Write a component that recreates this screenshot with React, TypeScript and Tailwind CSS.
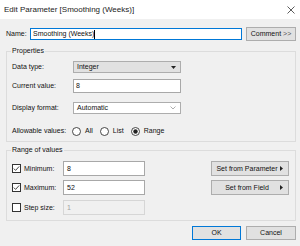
import React from "react";

const font = { fontFamily: '"Liberation Sans", Arial, sans-serif' };

function Check({ on }: { on: boolean }) {
  return (
    <svg width="9" height="9" viewBox="0 0 9 9" className="shrink-0">
      <rect x="0.5" y="0.5" width="8" height="8" fill="#fff" stroke="#333" />
      {on && <polyline points="1.8,4.6 3.6,6.4 7.2,2.4" fill="none" stroke="#333" strokeWidth="0.9" />}
    </svg>
  );
}

function Radio({ on, label }: { on: boolean; label: string }) {
  return (
    <div className="flex items-center gap-[4px]">
      <svg width="9" height="9" viewBox="0 0 9 9">
        <circle cx="4.5" cy="4.5" r="4" fill="#fff" stroke="#333" strokeWidth="0.9" />
        {on && <circle cx="4.5" cy="4.5" r="2.2" fill="#222" />}
      </svg>
      <span>{label}</span>
    </div>
  );
}

function Btn({ children, className = "" }: { children: React.ReactNode; className?: string }) {
  return (
    <div
      className={`h-[14px] bg-[#e1e1e1] border flex items-center justify-center ${className}`}
    >
      {children}
    </div>
  );
}

function SetBtn({ label }: { label: string }) {
  return (
    <div className="w-[78px] h-[15px] bg-[#e1e1e1] border border-[#adadad] flex items-center">
      <span className="flex-1 text-center pl-[2px]">{label}</span>
      <svg width="3" height="5" viewBox="0 0 3 5" className="mr-[5px]">
        <path d="M0 0 L3 2.5 L0 5 Z" fill="#222" />
      </svg>
    </div>
  );
}

function RangeRow({
  on,
  label,
  value,
  disabled,
  btn,
  mt,
}: {
  on: boolean;
  label: string;
  value: string;
  disabled?: boolean;
  btn?: string;
  mt: string;
}) {
  return (
    <div className={`flex items-center h-[15px] pl-[5px] ${mt}`}>
      <Check on={on} />
      <span className="ml-[3px] w-[39px]">{label}</span>
      <div
        className={`w-[82px] h-[15px] flex items-center pl-[3px] border ${
          disabled ? "bg-[#f0f0f0] border-[#d6d6d6] text-[#a0a0a0]" : "bg-white border-[#a8a8a8]"
        }`}
      >
        {value}
      </div>
      {btn && (
        <div className="ml-[66px]">
          <SetBtn label={btn} />
        </div>
      )}
    </div>
  );
}

export default function App() {
  return (
    <div style={font} className="w-[300px] h-[246px] bg-[#f0f0f0] text-[7px] leading-[10px] text-[#111] flex flex-col overflow-hidden">
      {/* title bar */}
      <div className="h-[19px] bg-white flex items-center justify-between pl-[4px] pr-[5px]">
        <span className="text-[8px] text-[#222]">Edit Parameter [Smoothing (Weeks)]</span>
        <svg width="8" height="8" viewBox="0 0 8 8">
          <path d="M0.5 0.5 L7.5 7.5 M7.5 0.5 L0.5 7.5" stroke="#333" strokeWidth="0.8" />
        </svg>
      </div>

      {/* name row */}
      <div className="mt-[8px] h-[14px] flex items-center pl-[6px] pr-[4px]">
        <span className="w-[24px]">Name:</span>
        <div className="w-[212px] h-[12px] bg-white border border-[#0078d7] flex items-center pl-[2px]">
          Smoothing (Weeks)
          <span className="w-px h-[9px] bg-black" />
        </div>
        <Btn className="ml-[4px] w-[50px] border-[#adadad]">
          Comment <span className="ml-[2px] text-[#555]">&gt;&gt;</span>
        </Btn>
      </div>

      {/* properties */}
      <fieldset className="mt-[5px] ml-[6px] mr-[4px] border border-[#dcdcdc] pb-[4px]">
        <legend className="ml-[4px] px-[1px] leading-[10px]">Properties</legend>
        <div className="flex items-center h-[12px] mt-[5px] pl-[5px]">
          <span className="w-[61px]">Data type:</span>
          <div className="w-[108px] h-[12px] bg-[#e1e1e1] border border-[#adadad] flex items-center justify-between pl-[3px] pr-[4px]">
            Integer
            <svg width="5" height="3" viewBox="0 0 5 3">
              <path d="M0 0 L5 0 L2.5 3 Z" fill="#222" />
            </svg>
          </div>
        </div>
        <div className="flex items-center h-[14px] mt-[6px] pl-[5px]">
          <span className="w-[61px]">Current value:</span>
          <div className="w-[108px] h-[14px] bg-white border border-[#a8a8a8] flex items-center pl-[2px]">8</div>
        </div>
        <div className="flex items-center h-[12px] mt-[9px] pl-[5px]">
          <span className="w-[61px]">Display format:</span>
          <div className="w-[108px] h-[12px] bg-white border border-[#adadad] flex items-center justify-between pl-[3px] pr-[4px]">
            Automatic
            <svg width="6" height="4" viewBox="0 0 6 4">
              <path d="M0.5 0.5 L3 3 L5.5 0.5" fill="none" stroke="#999" strokeWidth="0.8" />
            </svg>
          </div>
        </div>
        <div className="flex items-center h-[12px] mt-[11px] pl-[5px]">
          <span className="w-[60px]">Allowable values:</span>
          <div className="flex items-center gap-[7px]">
            <Radio on={false} label="All" />
            <Radio on={false} label="List" />
            <Radio on={true} label="Range" />
          </div>
        </div>
      </fieldset>

      {/* range of values */}
      <fieldset className="mt-[3px] ml-[6px] mr-[4px] border border-[#dcdcdc] pb-[5px]">
        <legend className="ml-[4px] px-[1px] leading-[10px]">Range of values</legend>
        <RangeRow on label="Minimum:" value="8" btn="Set from Parameter" mt="mt-[6px]" />
        <RangeRow on label="Maximum:" value="52" btn="Set from Field" mt="mt-[4px]" />
        <RangeRow on={false} label="Step size:" value="1" disabled mt="mt-[5px]" />
      </fieldset>

      {/* footer buttons */}
      <div className="mt-[5px] flex justify-end gap-[5px] pr-[4px]">
        <Btn className="w-[49px] border-[#0078d7]">OK</Btn>
        <Btn className="w-[50px] border-[#adadad]">Cancel</Btn>
      </div>
    </div>
  );
}
